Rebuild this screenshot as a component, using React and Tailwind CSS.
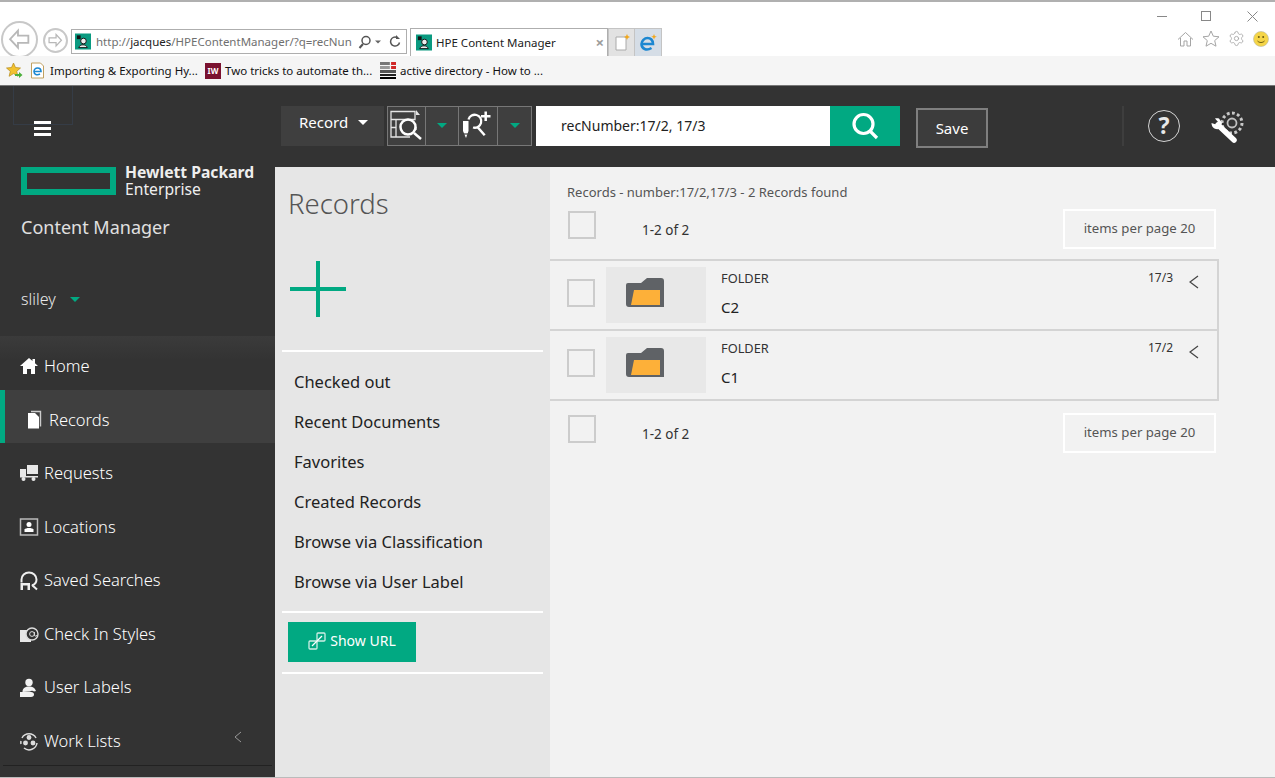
import React from "react";
import { Settings } from "lucide-react";

const TEAL = "#01a982";

function Favicon() {
  return (
    <svg width="16" height="17" viewBox="0 0 17 17" className="shrink-0">
      <rect width="17" height="17" fill="#0a9a80" />
      <rect x="2" y="2" width="4" height="4" fill="#111" />
      <circle cx="9" cy="8" r="3" fill="#eee" stroke="#111" />
      <path d="M4 15c1-4 8-4 9 0z" fill="#eee" stroke="#111" />
    </svg>
  );
}

function NavCircle({ size, dir = "left" }) {
  return (
    <div className="flex items-center justify-center rounded-full border-2 border-[#c8c8c8] bg-white shrink-0" style={{ width: size, height: size }}>
      <svg width={size * 0.66} height={size * 0.66} viewBox="0 0 20 20" fill="none" stroke="#b8b8b8" strokeWidth="1.500">
        {dir === "left" ? <path d="M9 3 2.500 10 9 17v-4h8.500V7H9z" /> : <path d="M11 3l6.500 7L11 17v-4H2.500V7H11z" />}
      </svg>
    </div>
  );
}

function BrowserChrome() {
  return (
    <div className="h-[86px] bg-white border-t-2 border-[#b0b0b0] flex flex-col font-['Open_Sans',sans-serif] text-[11.500px] text-[#222]">
      <div className="h-[54px] flex relative">
        <div className="flex items-end pl-[1px]">
          <div className="h-[35px] self-end overflow-hidden flex items-start">
            <NavCircle size={37} />
          </div>
          <div className="ml-[5px] mb-[3px]"><NavCircle size={25} dir="right" /></div>
          <div className="ml-[3px] mb-[2px] w-[336px] h-[25px] border border-[#aeaeae] flex items-center pl-[3px] pr-[3px]">
            <Favicon />
            <span className="ml-[5px] flex-1 overflow-hidden whitespace-nowrap text-[#6f6f6f] text-[11.500px]">
              http://<span className="text-[#222]">jacques</span>/HPEContentManager/?q=recNun
            </span>
            <svg width="46" height="16" viewBox="0 0 46 16" fill="none" stroke="#555" strokeWidth="1.500" className="shrink-0">
              <circle cx="9" cy="6.500" r="4" />
              <path d="M6 10 2.500 14" strokeWidth="2" />
              <path d="M18 6.500h6l-3 3z" fill="#666" stroke="none" />
              <path d="M40 3.500a4.500 4.500 0 1 0 2.500 5" />
              <path d="M39 1v4h4z" fill="#555" stroke="none" />
            </svg>
          </div>
          <div className="ml-[3px] w-[198px] h-[28px] border border-b-0 border-[#aeaeae] flex items-center pl-[5px] pr-[3px]">
            <Favicon />
            <span className="ml-[4px] flex-1 text-[#222]">HPE Content Manager</span>
            <span className="text-[#9c9c9c] text-[15px] leading-none font-bold">×</span>
          </div>
          <div className="w-[27px] h-[28px] bg-[#e2e2e2] border border-b-0 border-[#c4c4c4] flex items-center justify-center">
            <svg width="16" height="18" viewBox="0 0 16 18">
              <path d="M2 3h10v13H2z" fill="#fff" stroke="#aaa" />
              <path d="M13 0l.9 2.100L16 3l-2.100.9L13 6l-.9-2.100L10 3l2.100-.9z" fill="#f2a71b" />
            </svg>
          </div>
          <div className="w-[27px] h-[28px] bg-[#d5dde6] border border-b-0 border-l-0 border-[#c4c4c4] flex items-center justify-center">
            <svg width="18" height="18" viewBox="0 0 18 18" fill="none">
              <path d="M2.500 10h11.500c0-4-2.500-6-5.500-6S2.500 7 2.500 10c0 5 5 7 10 4" stroke="#1c87d1" strokeWidth="2.600" />
              <path d="M15 0l.8 2 2 .8-2 .8-.8 2-.8-2-2-.8 2-.8z" fill="#f2a71b" />
            </svg>
          </div>
        </div>
        <div className="ml-auto w-[130px] flex flex-col">
          <div className="h-[28px] flex items-center pl-[12px]">
            <span className="w-[10px] h-[1px] bg-[#888] shrink-0" />
            <span className="w-[10px] h-[10px] border border-[#888] ml-[34px] shrink-0" />
            <svg width="11" height="11" viewBox="0 0 11 11" stroke="#888" className="ml-[36px] shrink-0"><path d="M.5.500l10 10M10.500.500l-10 10" /></svg>
          </div>
          <div className="flex items-center pl-[32px] gap-[8px]">
            <svg width="17" height="16" viewBox="0 0 17 16" fill="none" stroke="#a5a5a5"><path d="M1 8.500 8.500 1.500 16 8.500M3.500 7v8h3.500v-5h3v5h3.500V7" /></svg>
            <svg width="18" height="17" viewBox="0 0 18 17" fill="none" stroke="#a5a5a5"><path d="M9 1l2.300 5.200 5.700.6-4.300 3.800 1.300 5.600L9 13.300l-5 2.900 1.300-5.600L1 6.800l5.700-.6z" /></svg>
            <Settings size={17} color="#a5a5a5" strokeWidth={1.200} />
            <svg width="16" height="16" viewBox="0 0 16 16"><circle cx="8" cy="8" r="7.500" fill="#f5d547" stroke="#b9b9a5" strokeWidth=".6" /><circle cx="5.800" cy="6" r="1" fill="#6a5a10" /><circle cx="10.200" cy="6" r="1" fill="#6a5a10" /><path d="M4.500 10c2 2 5 2 7 0" fill="none" stroke="#6a5a10" /></svg>
          </div>
        </div>
      </div>
      <div className="flex-1 bg-[#f5f5f5] flex items-center pl-[6px] text-[11.500px] text-[#111] border-b-[1px] border-[#777]">
        <svg width="17" height="17" viewBox="0 0 17 17" className="shrink-0">
          <path d="M7.500 1l2 4.500 5 .5-3.800 3.300 1.200 5-4.400-2.700-4.400 2.700 1.200-5L.5 6l5-.5z" fill="#f2c230" stroke="#b48a1a" strokeWidth=".7" />
          <path d="M9 12h4v-2l3.500 3-3.500 3v-2H9z" fill="#4caf3c" />
        </svg>
        <svg width="15" height="17" viewBox="0 0 14 17" className="ml-[7px] shrink-0" fill="none">
          <path d="M1 1h9l3 3v12H1z" fill="#fff" stroke="#c0a060" />
          <path d="M3.500 9.500h7c0-2.500-1.500-3.500-3.500-3.500s-3.500 1.500-3.500 3.500c0 3 3 4 6 2.500" stroke="#1c87d1" strokeWidth="1.600" />
        </svg>
        <span className="ml-[5px] w-[155px] whitespace-nowrap">Importing &amp; Exporting Hy...</span>
        <span className="w-[16px] h-[16px] bg-[#7b1230] text-white text-[8px] font-bold flex items-center justify-center font-['Liberation_Serif',serif] shrink-0">IW</span>
        <span className="ml-[4px] w-[155px] whitespace-nowrap">Two tricks to automate th...</span>
        <svg width="16" height="17" viewBox="0 0 13 17" preserveAspectRatio="none" className="shrink-0">
          <rect width="8" height="3" fill="#777" /><rect x="9" width="4" height="3" fill="#d02828" />
          <rect y="4" width="8" height="3" fill="#999" /><rect x="9" y="4" width="4" height="3" fill="#d02828" />
          <rect y="8" width="13" height="3" fill="#555" /><rect y="12" width="13" height="2" fill="#222" /><rect y="15" width="13" height="2" fill="#000" />
        </svg>
        <span className="ml-[4px] whitespace-nowrap">active directory - How to ...</span>
      </div>
    </div>
  );
}

function Caret({ color = TEAL }) {
  return <span className="inline-block w-0 h-0 border-x-[5px] border-x-transparent border-t-[5px]" style={{ borderTopColor: color }} />;
}

function AppHeader() {
  return (
    <div className="h-[81px] bg-[#333333] flex items-center text-white">
      <div className="w-[281px] h-full shrink-0 pl-[34px] flex items-center pt-[3px] relative">
        <div className="absolute left-[13px] top-0 w-[60px] h-[39px] border border-t-0 border-[#353c46]" />
        <div className="w-[17px] flex flex-col gap-[3px]">
          <span className="h-[3px] bg-white" /><span className="h-[3px] bg-white" /><span className="h-[3px] bg-white" />
        </div>
      </div>
      <div className="w-[103px] h-[40px] bg-[#3f3f3f] flex items-center pl-[18px] pb-[6px] gap-[10px] text-[15px] mt-[-2px]">
        Record <Caret color="#fff" />
      </div>
      <div className="ml-[3px] flex h-[40px] mt-[-2px] border border-[#777] bg-[#3f3f3f]">
        <div className="w-[38px] border-r border-[#777] flex items-center justify-center">
          <svg width="37" height="38" viewBox="0 0 37 38" fill="none" stroke="#fff">
            <path d="M3 4.500h24v8H3zM3 12.500h5v8H3zM3 20.500h5v9.500H3zM8 30h14M28 20v3" strokeWidth="1.300" stroke="#e4e4e4" />
            <path d="M28 3l4 5h-4z" fill="#e4e4e4" stroke="none" />
            <circle cx="20" cy="20" r="7.500" strokeWidth="2.500" />
            <path d="M26 26l7 6" strokeWidth="2.500" />
          </svg>
        </div>
        <div className="w-[33px] border-r border-[#777] flex items-center justify-center"><Caret /></div>
        <div className="w-[39px] border-r border-[#777] flex items-center justify-center">
          <svg width="38" height="38" viewBox="0 0 38 38" fill="none" stroke="#fff">
            <path d="M4 14h5.500v10L7 31l-3-7z" fill="#fff" stroke="none" />
            <path d="M4.500 27h4.500" stroke="#3f3f3f" strokeWidth="1.200" />
            <path d="M9.500 12.500A6.500 6.500 0 1 1 14 20.500" strokeWidth="2.300" />
            <path d="M18 19.500 25.700 28.300" strokeWidth="2.500" />
            <path d="M22 9.300h9.500M26.700 4.500v9.500" strokeWidth="2.500" />
          </svg>
        </div>
        <div className="w-[33px] flex items-center justify-center"><Caret /></div>
      </div>
      <div className="ml-[4px] w-[294px] h-[40px] mt-[-2px] bg-white text-[#222] text-[14px] flex items-center pl-[25px]">recNumber:17/2, 17/3</div>
      <div className="w-[70px] h-[40px] mt-[-2px] flex items-center justify-center" style={{ backgroundColor: TEAL }}>
        <svg width="30" height="30" viewBox="0 0 30 30" fill="none" stroke="#fff" strokeWidth="3.200"><circle cx="13.500" cy="13" r="9.500" /><path d="M20 20l7 7" /></svg>
      </div>
      <div className="ml-[16px] w-[72px] h-[40px] mt-[3px] border-2 border-[#7f7f7f] bg-[#3c3c3c] flex items-center justify-center text-[15px]">Save</div>
      <div className="ml-[134px] w-[2px] h-[40px] mt-[-2px] bg-[#3e3e3e]" />
      <div className="ml-[24px] w-[32px] h-[32px] mt-[-2px] rounded-full border-[1.500px] border-[#d5d5d5] flex items-center justify-center text-[23px] font-bold font-['Liberation_Sans',sans-serif] leading-none text-[#e8e8e8]">?</div>
      <svg width="36" height="36" viewBox="0 0 36 36" fill="none" className="ml-[30px] mt-[-2px]">
        <circle cx="22" cy="15" r="4.500" stroke="#c0c0c0" strokeWidth="1.800" />
        <circle cx="22" cy="15" r="10" stroke="#c8c8c8" strokeWidth="3" strokeDasharray="2.800 2.400" />
        <path d="M8 17 24 32" stroke="#fff" strokeWidth="5.500" strokeLinecap="round" />
        <path d="M1.500 15C1.500 20 6 22.500 10 20.500L12 15 9 10.500C7 10 5 10.500 5 10.500L8 14 6 16.500z" fill="#fff" />
      </svg>
    </div>
  );
}

const navIcons = {
  Home: <path d="M10 2 1 10h3v8h4v-5h4v5h4v-8h3l-3-2.700V3h-2.500v2.100z" fill="#fff" />,
  Records: <g><path d="M6 1.500h9.500v15" fill="none" stroke="#ccc" strokeWidth="1.400" /><path d="M3 3h7l4 4v11.500H3z" fill="#fff" /></g>,
  Requests: <g fill="#e8e8e8"><path d="M8 2h11v9H8z" /><path d="M1 6h6v7H1z" /><path d="M1 13h18v1.500H1z" /><circle cx="4.500" cy="16" r="2" /><circle cx="14.500" cy="16" r="2" /></g>,
  Locations: <g><rect x="1.500" y="2" width="17" height="16" fill="none" stroke="#bbb" strokeWidth="1.500" /><circle cx="10" cy="7.500" r="2.500" fill="#fff" /><path d="M5.500 15v-2.500c1-2 8-2 9 0V15z" fill="#fff" /></g>,
  "Saved Searches": <g fill="none" stroke="#eee"><path d="M2.500 11.500V8.500a7.500 7 0 0 1 15 0c0 2.500-2 5-4.500 6" strokeWidth="2" /><path d="M13 14l5 4.500" strokeWidth="2" /><path d="M1.500 12h9.500v7H1.500z" fill="#eee" stroke="none" /><path d="M4 14.500h4.500V19H4z" fill="#333" stroke="none" /></g>,
  "Check In Styles": <g><path d="M1 6h11v12H1z" fill="#e8e8e8" /><circle cx="13" cy="10" r="6" fill="#333" stroke="#ddd" strokeWidth="1.400" /><circle cx="13" cy="10" r="2.400" fill="none" stroke="#ddd" /><path d="M15.400 8v3c0 1.500 2 1.500 2.500 0" fill="none" stroke="#ddd" /></g>,
  "User Labels": <g fill="#f2f2f2"><circle cx="10" cy="4.500" r="3.700" /><path d="M3.500 14c0-4 3-5.500 6.500-5.500s5.500 1 7 4.500l-2 .5c-1-1-3-1-4 0z" /><path d="M1 14h11c2 0 3 1 3 2.500s-1 2.500-3 2.500H1z" /></g>,
  "Work Lists": <g fill="none" stroke="#ddd" strokeWidth="1.500"><path d="M3 7a8 8 0 0 1 14 0M18 12a8 8 0 0 1-13 5M2 13a8 8 0 0 1 0-3" /><circle cx="6.500" cy="12" r="1.700" fill="#ddd" /><circle cx="14" cy="12" r="1.700" fill="#ddd" /><circle cx="10" cy="6.500" r="1.700" fill="#ddd" /></g>,
};

function NavItem({ label, active, chevron }) {
  return (
    <div className={`h-[53.600px] flex items-center pt-[7px] text-[16.500px] font-light text-white ${active ? "bg-[#3f3f3f] border-l-[5px] border-[#01a982] pl-[20px]" : "pl-[19px]"}`}>
      <svg width="20" height="20" viewBox="0 0 20 20" className="shrink-0">{navIcons[label]}</svg>
      <span className={active ? "ml-[4px]" : "ml-[5px]"}>{label}</span>
      {chevron && (
        <svg width="10" height="12" viewBox="0 0 10 12" fill="none" stroke="#999" className="ml-auto mr-[32px] mt-[-8px]"><path d="M8 1 2 6l6 5" /></svg>
      )}
    </div>
  );
}

function Sidebar() {
  return (
    <div className="w-[275px] shrink-0 bg-[#333333] flex flex-col text-white">
      <div className="pl-[21px] flex items-start">
        <div className="w-[95px] h-[28px] border-[6px] border-[#01a982] shrink-0" />
        <div className="ml-[9px] text-[15.700px] leading-[17px] font-['Lato',sans-serif] text-[#eee] mt-[-3px] whitespace-nowrap">
          <div className="font-bold">Hewlett Packard</div>
          <div>Enterprise</div>
        </div>
      </div>
      <div className="pl-[21px] mt-[16px] text-[18px] leading-[26px] text-[#e0e0e0]">Content Manager</div>
      <div className="pl-[21px] mt-[46px] h-[26px] flex items-center text-[16px] font-light text-[#e8e8e8] gap-[14px]">sliley <Caret /></div>
      <div className="h-[24px] bg-gradient-to-b from-[#3b3b3b] to-[#333333] mt-[24px] mb-[-24px]" />
      <div className="flex flex-col">
        <NavItem label="Home" />
        <NavItem label="Records" active />
        <NavItem label="Requests" />
        <NavItem label="Locations" />
        <NavItem label="Saved Searches" />
        <NavItem label="Check In Styles" />
        <NavItem label="User Labels" />
        <NavItem label="Work Lists" chevron />
      </div>
      <div className="mx-[3px] border-t border-[#222]" />
    </div>
  );
}

function MidPanel() {
  const items = ["Checked out", "Recent Documents", "Favorites", "Created Records", "Browse via Classification", "Browse via User Label"];
  return (
    <div className="w-[275px] shrink-0 bg-[#e6e6e6] flex flex-col text-[#222]">
      <div className="pl-[13px] mt-[18px] text-[27.500px] leading-[38px] text-[#555] font-light">Records</div>
      <svg width="58" height="58" viewBox="0 0 58 58" className="ml-[14px] mt-[37px]" stroke="#01a982" strokeWidth="4"><path d="M29 1v56M1 29h56" /></svg>
      <div className="mx-[7px] mt-[32px] border-t-2 border-white" />
      <div className="pt-[10px] pb-[9px]">
        {items.map((t) => (
          <div key={t} className="h-[40px] flex items-center pl-[19px] text-[16.500px]">{t}</div>
        ))}
      </div>
      <div className="mx-[7px] border-t-2 border-white" />
      <div className="ml-[13px] mt-[9px] w-[128px] h-[40px] flex items-center justify-center gap-[4px] pb-[3px] text-white text-[14px]" style={{ backgroundColor: TEAL }}>
        <svg width="18" height="18" viewBox="0 0 18 18" fill="none" stroke="#cfeee6" strokeWidth="1.300">
          <rect x="1" y="9" width="8" height="8" rx="1" /><rect x="9" y="1" width="8" height="8" rx="1" /><path d="M4 14 14 4" stroke="#fff" />
        </svg>
        Show URL
      </div>
      <div className="mx-[7px] mt-[10px] border-t-2 border-white" />
    </div>
  );
}

function Checkbox({ className = "" }) {
  return <div className={`w-[28px] h-[28px] border-2 border-[#cccccc] shrink-0 ${className}`} />;
}

function Pager({ className = "" }) {
  return (
    <div className={`flex items-center h-[40px] pl-[18px] pr-[3px] ${className}`}>
      <Checkbox className="self-start mt-[2px]" />
      <span className="ml-[46px] text-[13.500px] text-[#333] mt-[3px]">1-2 of 2</span>
      <div className="ml-auto w-[153px] h-[40px] border-2 border-white flex items-center justify-center text-[13.200px] text-[#555]">items per page 20</div>
    </div>
  );
}

function Row({ name, num }) {
  return (
    <div className="h-[70px] border-b-2 border-[#d4d4d4] flex items-start">
      <Checkbox className="ml-[17px] mt-[18px]" />
      <div className="ml-[11px] mt-[6px] w-[100px] h-[56px] bg-[#e8e8e8] flex items-center pl-[20px] pb-[6px]">
        <svg width="38" height="30" viewBox="0 0 38 30">
          <path d="M0 8Q0 6 2 6H15L21 1H35Q38 1 38 4V30H3Q0 30 0 27z" fill="#5f6266" />
          <path d="M8 13H34V28H5z" fill="#fdb039" />
        </svg>
      </div>
      <div className="ml-[15px] flex flex-col text-[#333]">
        <span className="text-[12.800px] leading-[16px] mt-[9px]">FOLDER</span>
        <span className="text-[15px] leading-[20px] mt-[11px] text-[#222]">{name}</span>
      </div>
      <span className="ml-auto mt-[9px] text-[12px] leading-[16px] text-[#333]">{num}</span>
      <svg width="10" height="14" viewBox="0 0 10 14" fill="none" stroke="#444" strokeWidth="1.200" className="ml-[16px] mr-[18px] mt-[14px]"><path d="M9 1 1 7l8 6" /></svg>
    </div>
  );
}

function MainPanel() {
  return (
    <div className="flex-1 bg-[#f2f2f2] pt-[16px] flex flex-col">
      <div className="w-[669px]">
        <div className="pl-[17px] text-[13px] leading-[18px] text-[#555]">Records - number:17/2,17/3 - 2 Records found</div>
        <Pager className="mt-[8px] mb-[10px]" />
        <div className="border-t-2 border-r-2 border-[#d4d4d4]">
          <Row name="C2" num="17/3" />
          <Row name="C1" num="17/2" />
        </div>
        <Pager className="mt-[12px]" />
      </div>
    </div>
  );
}

export default function App() {
  return (
    <div className="w-[1275px] h-[778px] overflow-hidden flex flex-col font-['Noto_Sans',sans-serif]">
      <BrowserChrome />
      <AppHeader />
      <div className="flex-1 flex min-h-0 border-b border-[#bbb]">
        <Sidebar />
        <MidPanel />
        <MainPanel />
      </div>
    </div>
  );
}
